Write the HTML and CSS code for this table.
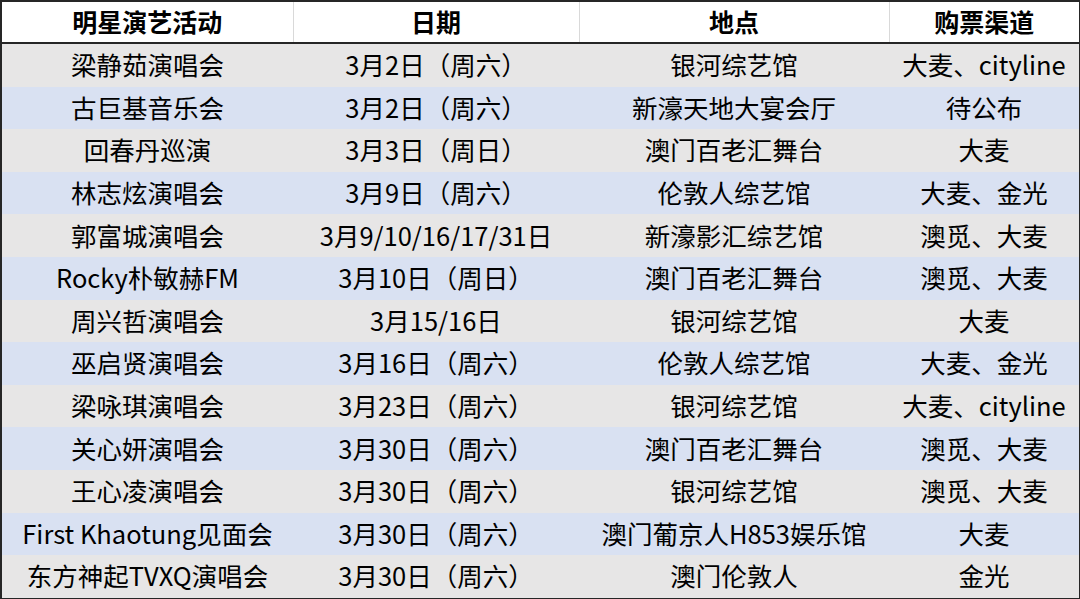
FILE: index.html
```html
<!DOCTYPE html>
<html lang="zh">
<head>
<meta charset="utf-8">
<link rel="stylesheet" href="styles.css">
</head>
<body>
<table class="events">
  <colgroup>
    <col class="c1"><col class="c2"><col class="c3"><col class="c4">
  </colgroup>
  <thead>
    <tr><th>明星演艺活动</th><th>日期</th><th>地点</th><th>购票渠道</th></tr>
  </thead>
  <tbody>
    <tr><td>梁静茹演唱会</td><td>3月2日（周六）</td><td>银河综艺馆</td><td>大麦、cityline</td></tr>
    <tr><td>古巨基音乐会</td><td>3月2日（周六）</td><td>新濠天地大宴会厅</td><td>待公布</td></tr>
    <tr><td>回春丹巡演</td><td>3月3日（周日）</td><td>澳门百老汇舞台</td><td>大麦</td></tr>
    <tr><td>林志炫演唱会</td><td>3月9日（周六）</td><td>伦敦人综艺馆</td><td>大麦、金光</td></tr>
    <tr><td>郭富城演唱会</td><td>3月9/10/16/17/31日</td><td>新濠影汇综艺馆</td><td>澳觅、大麦</td></tr>
    <tr><td>Rocky朴敏赫FM</td><td>3月10日（周日）</td><td>澳门百老汇舞台</td><td>澳觅、大麦</td></tr>
    <tr><td>周兴哲演唱会</td><td>3月15/16日</td><td>银河综艺馆</td><td>大麦</td></tr>
    <tr><td>巫启贤演唱会</td><td>3月16日（周六）</td><td>伦敦人综艺馆</td><td>大麦、金光</td></tr>
    <tr><td>梁咏琪演唱会</td><td>3月23日（周六）</td><td>银河综艺馆</td><td>大麦、cityline</td></tr>
    <tr><td>关心妍演唱会</td><td>3月30日（周六）</td><td>澳门百老汇舞台</td><td>澳觅、大麦</td></tr>
    <tr><td>王心凌演唱会</td><td>3月30日（周六）</td><td>银河综艺馆</td><td>澳觅、大麦</td></tr>
    <tr><td>First Khaotung见面会</td><td>3月30日（周六）</td><td>澳门葡京人H853娱乐馆</td><td>大麦</td></tr>
    <tr><td>东方神起TVXQ演唱会</td><td>3月30日（周六）</td><td>澳门伦敦人</td><td>金光</td></tr>
  </tbody>
</table>
</body>
</html>
```
FILE: styles.css
```css
html, body {
  margin: 0;
  padding: 0;
  background: #ffffff;
}
.events {
  border-collapse: collapse;
  table-layout: fixed;
  width: 1079px;
  border: 2px solid #262626;
  font-family: "Noto Sans CJK SC", "Microsoft YaHei", sans-serif;
  font-size: 25.5px;
  color: #000;
  text-align: center;
}
.c1 { width: 292px; }
.c2 { width: 286px; }
.c3 { width: 310px; }
.c4 { width: 191px; }
.events th {
  height: 38px;
  padding: 0 0 2px 0;
  font-size: 25px;
  font-weight: bold;
  background: #ffffff;
  border-bottom: 2px solid #262626;
  border-left: 1px solid #d9d9d9;
  line-height: 38px;
}
.events th:first-child { border-left: none; }
.events td {
  height: 39.6px;
  padding: 0 0 3px 0;
  line-height: 39px;
  white-space: nowrap;
}
.events tbody tr:nth-child(odd) td { background: #e7e6e6; }
.events tbody tr:nth-child(even) td { background: #d9e1f2; }
```
